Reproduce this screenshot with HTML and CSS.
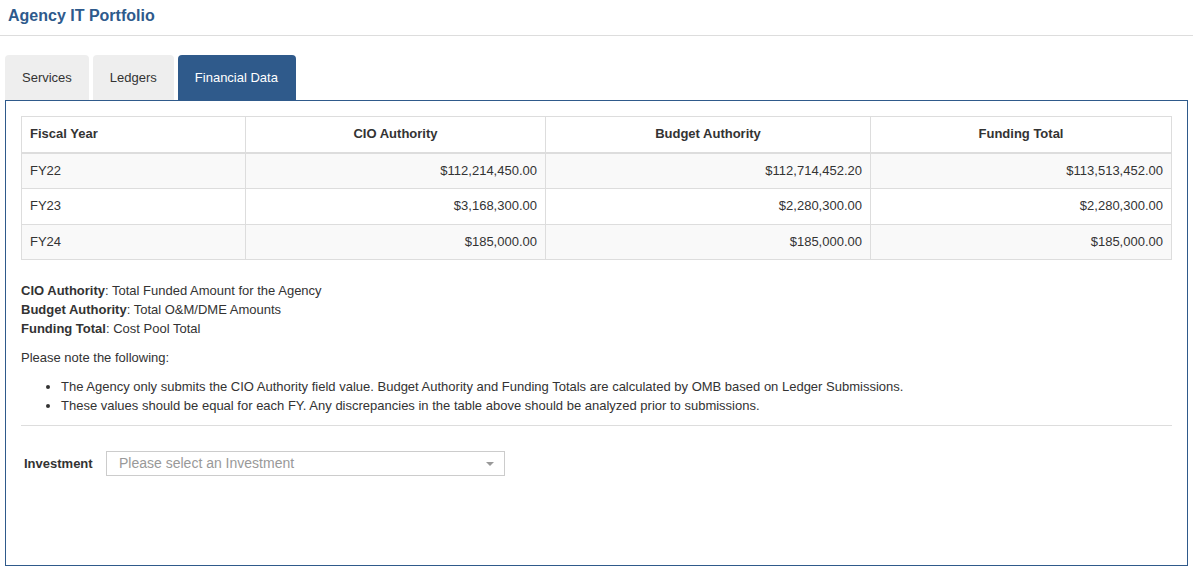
FILE: index.html
```html
<!DOCTYPE html>
<html lang="en">
<head>
    <meta charset="UTF-8">
    <title>Agency IT Portfolio</title>
    <link rel="stylesheet" href="styles.css">
</head>
<body>
<div class="page-header">
    <h1>Agency IT Portfolio</h1>
</div>

<div class="tabs">
    <div class="tab">Services</div>
    <div class="tab">Ledgers</div>
    <div class="tab active">Financial Data</div>
</div>

<div class="tab-panel">
    <table class="fin-table">
        <thead>
            <tr>
                <th class="col-year">Fiscal Year</th>
                <th class="col-cio">CIO Authority</th>
                <th class="col-budget">Budget Authority</th>
                <th>Funding Total</th>
            </tr>
        </thead>
        <tbody>
            <tr>
                <td>FY22</td>
                <td class="num">$112,214,450.00</td>
                <td class="num">$112,714,452.20</td>
                <td class="num">$113,513,452.00</td>
            </tr>
            <tr>
                <td>FY23</td>
                <td class="num">$3,168,300.00</td>
                <td class="num">$2,280,300.00</td>
                <td class="num">$2,280,300.00</td>
            </tr>
            <tr>
                <td>FY24</td>
                <td class="num">$185,000.00</td>
                <td class="num">$185,000.00</td>
                <td class="num">$185,000.00</td>
            </tr>
        </tbody>
    </table>

    <div class="notes">
        <p>
            <b>CIO Authority</b>: Total Funded Amount for the Agency<br>
            <b>Budget Authority</b>: Total O&amp;M/DME Amounts<br>
            <b>Funding Total</b>: Cost Pool Total
        </p>
        <p>Please note the following:</p>
        <ul>
            <li>The Agency only submits the CIO Authority field value. Budget Authority and Funding Totals are calculated by OMB based on Ledger Submissions.</li>
            <li>These values should be equal for each FY. Any discrepancies in the table above should be analyzed prior to submissions.</li>
        </ul>
    </div>

    <hr>

    <div class="form-row">
        <label>Investment</label>
        <div class="select-box">
            <span class="placeholder">Please select an Investment</span>
            <span class="caret"></span>
        </div>
    </div>
</div>
</body>
</html>
```

FILE: styles.css
```css
body {
    margin: 0;
    font-family: "Liberation Sans", Arial, sans-serif;
    font-size: 13px;
    line-height: 1.42857;
    color: #333;
    background-color: #fff;
}

.page-header {
    height: 35px;
    border-bottom: 1px solid #ddd;
    padding: 0 8px;
}

.page-header h1 {
    margin: 0;
    font-size: 16px;
    line-height: 32px;
    font-weight: bold;
    color: #2e5a8c;
}

.tabs {
    display: flex;
    gap: 4px;
    margin-top: 19px;
    padding-left: 5px;
}

.tab {
    height: 45px;
    line-height: 45px;
    padding: 0 17px;
    background-color: #eee;
    border-radius: 4px 4px 0 0;
    color: #333;
}

.tab.active {
    background-color: #2f5a8b;
    color: #fff;
    padding: 0 18px 0 17px;
}

.tab-panel {
    margin: 0 5px 0 5px;
    border: 1px solid #2f5a8b;
    padding: 15px;
    height: 434px;
}

.fin-table {
    width: 100%;
    border-collapse: collapse;
    border: 1px solid #ddd;
    margin-bottom: 21px;
}

.fin-table th,
.fin-table td {
    border: 1px solid #ddd;
    padding: 8px;
    text-align: center;
}

.fin-table th {
    border-bottom-width: 2px;
    font-weight: bold;
}

.fin-table th.col-year,
.fin-table td {
    text-align: left;
}

.fin-table td.num {
    text-align: right;
}

.col-year { width: 207px; }
.col-cio { width: 283px; }
.col-budget { width: 308px; }

.fin-table tbody tr:nth-child(odd) {
    background-color: #f9f9f9;
}

.notes {
    line-height: 19px;
}

p {
    margin: 0 0 10px;
}

ul {
    margin: 0 0 10px;
    padding-left: 40px;
}

hr {
    margin: 0;
    border: 0;
    border-top: 1px solid #ddd;
}

.form-row {
    display: flex;
    align-items: center;
    margin-top: 25px;
    padding-left: 3px;
}

.form-row label {
    font-weight: bold;
    width: 82px;
    padding-top: 1px;
}

.select-box {
    position: relative;
    width: 385px;
    height: 23px;
    border: 1px solid #ccc;
    padding: 0 0 0 12px;
    line-height: 23px;
    font-size: 14px;
}

.placeholder {
    color: #999;
}

.caret {
    position: absolute;
    right: 10px;
    top: 10px;
    border-left: 4px solid transparent;
    border-right: 4px solid transparent;
    border-top: 4px solid #999;
}
```
